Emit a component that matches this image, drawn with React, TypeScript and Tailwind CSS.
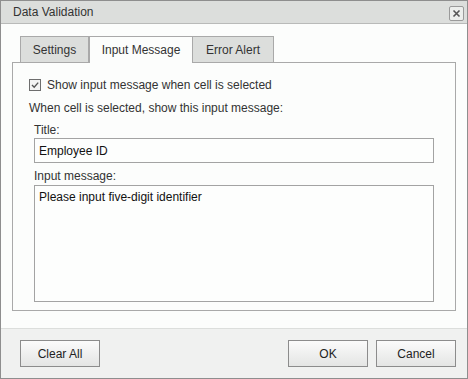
import React from "react";

const font = { fontFamily: '"Liberation Sans", Arial, sans-serif' };

function Btn({ label, className = "" }: { label: string; className?: string }) {
  return (
    <div
      className={
        "flex h-[27px] w-[80px] items-center justify-center border border-[#8c8c8c] bg-gradient-to-b from-[#fbfbfb] to-[#e4e5e4] text-[12px] text-[#222] " +
        className
      }
    >
      {label}
    </div>
  );
}

export default function App() {
  return (
    <div
      className="relative flex h-[379px] w-[468px] flex-col border border-[#8e8e8e] bg-[#fcfdfc] text-[12px] text-[#333]"
      style={font}
    >
      {/* title bar */}
      <div className="flex h-[23px] shrink-0 items-center justify-between border-b border-[#b9bab9] bg-[#dcdedc] pl-[12px] pr-[3px]">
        <span className="text-[12px] text-[#333]">Data Validation</span>
        <div className="mt-[3px] flex h-[15px] w-[15px] items-center justify-center rounded-[2px] border border-[#9a9a9a] bg-[#eceeec]">
          <svg width="9" height="9" viewBox="0 0 9 9">
            <path d="M1.5 1.5 L7.5 7.5 M7.5 1.5 L1.5 7.5" stroke="#555" strokeWidth="1.6" />
          </svg>
        </div>
      </div>

      {/* body */}
      <div className="flex flex-1 flex-col px-[11px] pt-[12px]">
        {/* tabs */}
        <div className="ml-[8px] flex h-[26px] items-end">
          <div className="flex h-[26px] w-[69px] items-center justify-center border border-b-0 border-[#a9a9a9] bg-[#dcdedc] text-[#333]">
            Settings
          </div>
          <div className="relative z-10 -mb-px flex h-[27px] w-[104px] items-center justify-center border border-b-0 border-[#a9a9a9] bg-[#fcfdfc] pb-px text-[#333]">
            Input Message
          </div>
          <div className="flex h-[26px] w-[81px] items-center justify-center border border-b-0 border-l-0 border-[#a9a9a9] bg-[#dcdedc] text-[#333]">
            Error Alert
          </div>
        </div>
        {/* panel */}
        <div className="flex h-[249px] w-[444px] flex-col border border-[#a9a9a9] bg-[#fcfdfc] pl-[16px] pr-[21px]">
          <div className="mt-[15px] flex h-[14px] items-center">
            <div className="flex h-[12px] w-[12px] items-center justify-center border border-[#6e6e6e] bg-[#f4f4f4]">
              <svg width="10" height="10" viewBox="0 0 10 10">
                <path d="M2 5 L4.2 7.2 L8.2 2.6" stroke="#555" strokeWidth="1.4" fill="none" />
              </svg>
            </div>
            <span className="ml-[6px] text-[#333]">Show input message when cell is selected</span>
          </div>
          <div className="mt-[9px] h-[14px] leading-[14px] text-[#333]">
            When cell is selected, show this input message:
          </div>
          <div className="ml-[5px] mt-[8px] h-[14px] leading-[14px] text-[#333]">Title:</div>
          <div className="ml-[5px] mt-[1px] flex h-[25px] w-[400px] items-center border border-[#a3a3a3] bg-[#fdfefd] px-[4px] text-[#111]">
            Employee ID
          </div>
          <div className="ml-[5px] mt-[6px] h-[14px] leading-[14px] text-[#333]">Input message:</div>
          <div className="ml-[5px] mt-[2px] h-[117px] w-[400px] border border-[#a3a3a3] bg-[#fdfefd] px-[4px] pt-[4px] leading-[14px] text-[#111]">
            Please input five-digit identifier
          </div>
        </div>
      </div>

      {/* footer */}
      <div className="mt-auto flex h-[50px] shrink-0 items-start border-t border-[#dcdedc] bg-[#f0f1f0] pl-[19px] pr-[11px] pt-[11px]">
        <Btn label="Clear All" />
        <div className="flex-1" />
        <Btn label="OK" />
        <Btn label="Cancel" className="ml-[8px]" />
      </div>
    </div>
  );
}
